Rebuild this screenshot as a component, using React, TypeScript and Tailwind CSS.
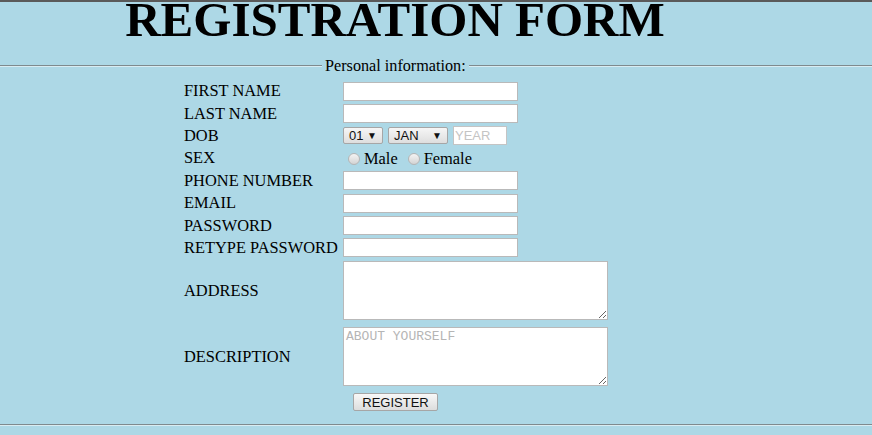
import React from 'react';

const Line = ({ className = '' }: { className?: string }) => (
  <div className={`h-[2px] border-t border-[#7f8a8e] border-b border-b-[#d9ecf2] ${className}`} />
);

const TextBox = () => (
  <input type="text" className="w-[175px] h-[19px] shrink-0 border border-[#b9b9b9] bg-white outline-none" />
);

const Select = ({ value, width }: { value: string; width: string }) => (
  <div
    className={`${width} h-[17px] shrink-0 flex items-center justify-between pl-[5px] pr-[5px] rounded-[2px] border border-[#a6a6a6] bg-gradient-to-b from-[#f6f6f6] to-[#dedede] font-['Liberation_Sans',sans-serif] text-[13px] leading-none text-[#111]`}
  >
    <span>{value}</span>
    <span className="text-[10px]">▼</span>
  </div>
);

const Radio = () => (
  <span className="inline-block w-[12px] h-[12px] rounded-full border border-[#b5b5b5] bg-gradient-to-b from-[#f4f4f4] to-[#d4d4d4]" />
);

type Row = { label: string; field: React.ReactNode };

export default function App() {
  const rows: Row[] = [
    { label: 'FIRST NAME', field: <TextBox /> },
    { label: 'LAST NAME', field: <TextBox /> },
    {
      label: 'DOB',
      field: (
        <div className="flex items-center gap-[5px]">
          <Select value="01" width="w-[40px]" />
          <Select value="JAN" width="w-[60px]" />
          <input
            placeholder="YEAR"
            className="w-[54px] h-[19px] border border-[#c4c4c4] bg-white px-[1px] font-['Liberation_Sans',sans-serif] text-[13px] placeholder:text-[#c4c4c4] outline-none"
          />
        </div>
      ),
    },
    {
      label: 'SEX',
      field: (
        <div className="flex items-center pl-[5px] pt-[2px] gap-[4px]">
          <Radio />
          <span>Male</span>
          <span className="w-[2px]" />
          <Radio />
          <span>Female</span>
        </div>
      ),
    },
    { label: 'PHONE NUMBER', field: <TextBox /> },
    { label: 'EMAIL', field: <TextBox /> },
    { label: 'PASSWORD', field: <TextBox /> },
    { label: 'RETYPE PASSWORD', field: <TextBox /> },
  ];

  return (
    <div className="w-[872px] h-[435px] overflow-hidden bg-[#add8e6] border-t-2 border-[#5a5a5a] font-['Liberation_Serif',serif] text-[16.4px] text-black">
      <div className="w-[790px]">
        <h1 className="text-center text-[49px] font-bold leading-[36px]">REGISTRATION FORM</h1>
      </div>

      {/* legend */}
      <div className="flex items-center mt-[19px]">
        <Line className="w-[322px]" />
        <span className="px-[3px] text-[16.2px] leading-[18px]">Personal information:</span>
        <Line className="flex-1" />
      </div>

      <div className="w-[424px] ml-[184px] pt-[5px] flex flex-col">
        {rows.map((r) => (
          <div key={r.label} className="h-[22.4px] flex items-center">
            <div className="w-[159px] shrink-0 leading-[18px]">{r.label}</div>
            {r.field}
          </div>
        ))}
        <div className="h-[66px] flex items-center pb-[4px]">
          <div className="w-[159px] shrink-0 mt-[3px]">ADDRESS</div>
          <textarea className="w-[265px] h-[59px] shrink-0 border border-[#b9b9b9] bg-white resize-y outline-none" />
        </div>
        <div className="h-[66px] flex items-center pb-[4px]">
          <div className="w-[159px] shrink-0 mt-[3px]">DESCRIPTION</div>
          <textarea
            placeholder="ABOUT YOURSELF"
            className="w-[265px] h-[59px] shrink-0 border border-[#b9b9b9] bg-white px-[2px] py-[1px] font-['Liberation_Mono',monospace] text-[13px] leading-[15px] placeholder:text-[#b5b5b5] resize-y outline-none"
          />
        </div>
        <div className="h-[22.4px] flex items-center pl-[169px]">
          <button className="w-[85px] h-[18px] rounded-[2px] border border-[#a6a6a6] bg-gradient-to-b from-[#f8f8f8] to-[#dddddd] font-['Liberation_Sans',sans-serif] text-[13px] leading-none text-[#111]">
            REGISTER
          </button>
        </div>
      </div>

      <Line className="mt-[10px]" />
    </div>
  );
}
